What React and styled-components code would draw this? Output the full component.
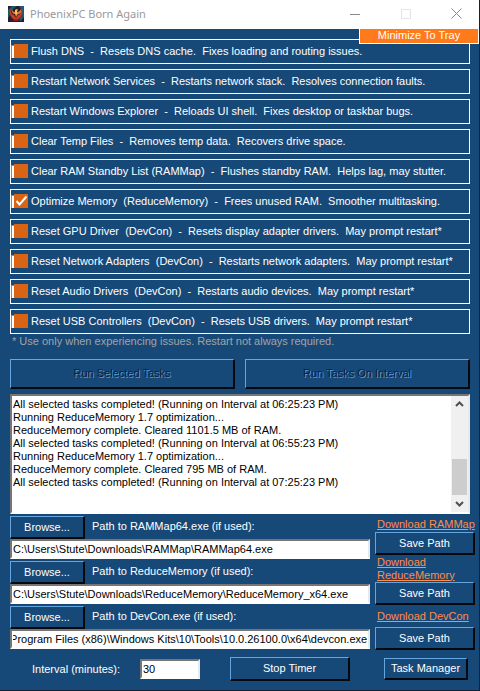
import React, { useEffect, useRef, useState } from 'react';
import styled, { createGlobalStyle, css } from 'styled-components';

const GlobalStyle = createGlobalStyle`
  *, *::before, *::after { box-sizing: border-box; }
  body {
    margin: 0;
    background: #174978;
    font: 11px/13px "Liberation Sans", Arial, sans-serif;
  }
  button, input, textarea { font: inherit; margin: 0; border-radius: 0; }
`;

const Window = styled.div`
  display: flex;
  flex-direction: column;
  min-height: 100vh;
  color: #fff;
  background: #174978;
  border-right: 1px solid #16222e;
  border-bottom: 1px solid #16222e;
`;

const TitleBar = styled.header`
  display: flex;
  align-items: center;
  height: 29px;
  padding: 0 0 2px 8px;
  gap: 6px;
  background: #fff;
  color: #999;
`;

const Title = styled.h1`
  flex: 1;
  margin: 0;
  font: 11px/16px "Noto Sans", sans-serif;
`;

const WindowButton = styled.button`
  display: grid;
  place-items: center;
  width: 45px;
  height: 27px;
  padding: 0;
  border: 0;
  background: none;
  color: ${(p) => (p.disabled ? '#e4e4e4' : '#8a8a8a')};
`;

const Client = styled.main`
  position: relative;
  display: flex;
  flex-direction: column;
  padding: 10px 4px 0 10px;
`;

const TrayButton = styled.button`
  position: absolute;
  top: 0;
  right: 0;
  width: 120px;
  height: 15px;
  padding: 0 0 2px;
  border: solid #fff;
  border-width: 0 1px 1px;
  background: #ff7a1a;
  color: #fff;
  line-height: 12px;
`;

const TaskList = styled.ul`
  display: flex;
  flex-direction: column;
  gap: 5px;
  margin: 0 5px 0 0;
  padding: 0;
  list-style: none;
`;

const TaskItem = styled.li`
  height: 25px;
  border: 1px solid #fff;
`;

const TaskLabel = styled.label`
  display: flex;
  align-items: center;
  height: 100%;
  padding-bottom: 1px;
  white-space: pre;
`;

const CheckWrap = styled.span`
  display: grid;
  margin-right: 3px;
  padding-left: 3px;
  background: linear-gradient(#8a8a8a, #8a8a8a) 0 1px / 3px 1px no-repeat,
    linear-gradient(90deg, #8a8a8a 1px, #fff 1px) 0 1px / 3px 13px no-repeat;
  & > * { grid-area: 1 / 1; }
  svg { pointer-events: none; }
`;

const CheckBox = styled.input`
  appearance: none;
  width: 14px;
  height: 14px;
  background: #d86414;
`;

const Footnote = styled.p`
  margin: 0 0 0 2px;
  padding-top: 1px;
  height: 25px;
  color: #a3a3a3;
`;

const RaisedButton = styled.button`
  height: ${(p) => p.$height || 23}px;
  width: ${(p) => (p.$width ? `${p.$width}px` : 'auto')};
  padding: 0;
  border: solid;
  border-width: 1px 2px 2px 1px;
  border-color: #66a6e0 #05090d #05090d #66a6e0;
  background: #174978;
  color: #fff;
  ${(p) =>
    p.disabled &&
    css`
      color: #0c2239;
      text-shadow: 1px 1px 0 #5b9bd8;
    `}
`;

const RunButtons = styled.div`
  display: grid;
  grid-template-columns: 1fr 1fr;
  gap: 10px;
  margin-right: 5px;
`;

const sunken = css`
  border: solid;
  border-width: 2px;
  border-color: #767676 #e6eaee #fff #767676;
  background: #fff;
  color: #000;
`;

const LogFrame = styled.div`
  ${sunken}
  display: flex;
  height: 120px;
  margin: 5px 5px 2px 0;
`;

const LogText = styled.textarea`
  flex: 1;
  min-width: 0;
  padding: 2px 1px;
  border: 0;
  outline: 0;
  resize: none;
  overflow: hidden;
  background: #fff;
  color: #000;
`;

const ScrollTrack = styled.div`
  display: flex;
  flex-direction: column;
  width: 17px;
  background: #f0f0f0;
`;

const ScrollArrow = styled.button`
  display: grid;
  place-items: center;
  height: 17px;
  padding: 0;
  border: 0;
  background: none;
  color: #505050;
`;

const ScrollThumb = styled.div`
  height: 36px;
  margin: auto 1px 0;
  background: #cdcdcd;
`;

const Paths = styled.section`
  display: grid;
  grid-template-columns: 1fr 100px;
  gap: 5px;
`;

const PathFields = styled.div`
  display: flex;
  flex-direction: column;
  gap: 2px;
  min-width: 0;
`;

const PathHeader = styled.div`
  display: flex;
  gap: 7px;
`;

const PathLabel = styled.label`
  padding-top: 4px;
`;

const TextBox = styled.input`
  ${sunken}
  display: block;
  width: ${(p) => p.$width || '100%'};
  height: 20px;
  padding: 0 1px;
  outline: 0;
`;

const PathActions = styled.div`
  display: grid;
  grid-template-rows: 16px 23px 27px 23px 22px 23px;
`;

const LinkCell = styled.div`
  display: flex;
  align-items: center;
  padding-left: 2px;
`;

const DownloadLink = styled.a`
  color: #ff8c4a;
`;

const Footer = styled.footer`
  display: flex;
  align-items: center;
  margin: 7px 7px 7px 0;
  padding-left: 22px;
`;

const IntervalLabel = styled.label`
  width: 108px;
`;

const StopSlot = styled.div`
  margin: 0 auto 0 30px;
`;

const tasks = [
  'Flush DNS  -  Resets DNS cache.  Fixes loading and routing issues.',
  'Restart Network Services  -  Restarts network stack.  Resolves connection faults.',
  'Restart Windows Explorer  -  Reloads UI shell.  Fixes desktop or taskbar bugs.',
  'Clear Temp Files  -  Removes temp data.  Recovers drive space.',
  'Clear RAM Standby List (RAMMap)  -  Flushes standby RAM.  Helps lag, may stutter.',
  'Optimize Memory  (ReduceMemory)  -  Frees unused RAM.  Smoother multitasking.',
  'Reset GPU Driver  (DevCon)  -  Resets display adapter drivers.  May prompt restart*',
  'Reset Network Adapters  (DevCon)  -  Restarts network adapters.  May prompt restart*',
  'Reset Audio Drivers  (DevCon)  -  Restarts audio devices.  May prompt restart*',
  'Reset USB Controllers  (DevCon)  -  Resets USB drivers.  May prompt restart*',
];

const log = [
  'All selected tasks completed! (Running on Interval at 06:25:23 PM)',
  'Running ReduceMemory 1.7 optimization...',
  'ReduceMemory complete. Cleared 1101.5 MB of RAM.',
  'All selected tasks completed! (Running on Interval at 06:55:23 PM)',
  'Running ReduceMemory 1.7 optimization...',
  'ReduceMemory complete. Cleared 795 MB of RAM.',
  'All selected tasks completed! (Running on Interval at 07:25:23 PM)',
].join('\n');

const tools = [
  { id: 'rammap', label: 'Path to RAMMap64.exe (if used):', path: 'C:\\Users\\Stute\\Downloads\\RAMMap\\RAMMap64.exe', link: 'Download RAMMap' },
  { id: 'reduce', label: 'Path to ReduceMemory (if used):', path: 'C:\\Users\\Stute\\Downloads\\ReduceMemory\\ReduceMemory_x64.exe', link: 'Download ReduceMemory' },
  { id: 'devcon', label: 'Path to DevCon.exe (if used):', path: 'C:\\Program Files (x86)\\Windows Kits\\10\\Tools\\10.0.26100.0\\x64\\devcon.exe', link: 'Download DevCon' },
];

function PhoenixLogo() {
  return (
    <svg width="16" height="16" viewBox="0 0 16 16" aria-hidden="true">
      <rect width="16" height="16" fill="#2a1c2c" />
      <path d="M0 4 4 0h5L4 4 2 9 0 12z" fill="#1b5a63" />
      <path d="M11 0h5v11l-3 4-2-1 3-5V5z" fill="#2a5478" />
      <path d="M2 3c-1 5 1 10 6 11 5-1 7-6 6-11-1 3-2 6-4 6l-2 3-2-3C4 9 3 6 2 3z" fill="#c9401f" />
      <path d="M4 2c-1 4 1 6 3 6l1 3 2-3c2 0 4-2 3-5-1 2-2 3-4 3L8 3 7 6C5 6 4 5 4 2z" fill="#ee7a30" />
      <path d="M7 4l2-1 1 1-1 1v3L8 9 7 7z" fill="#f8c05a" />
      <path d="M3 11c3 3 7 3 10 0l-3 4H6z" fill="#8a2030" />
    </svg>
  );
}

function CheckMark() {
  return (
    <svg width="14" height="14" viewBox="0 0 14 14" aria-hidden="true">
      <path d="M2.500 7 5.500 10.500 12.500 2.500" fill="none" stroke="#fff" strokeWidth="2" />
    </svg>
  );
}

function Chevron({ up }) {
  return (
    <svg width="9" height="7" viewBox="0 0 9 7" aria-hidden="true">
      <path d={up ? 'M1 5 4.500 1.500 8 5' : 'M1 2 4.500 5.500 8 2'} fill="none" stroke="currentColor" strokeWidth="2" />
    </svg>
  );
}

function Task({ text, initial }) {
  const [on, setOn] = useState(initial);
  return (
    <TaskItem>
      <TaskLabel>
        <CheckWrap>
          <CheckBox type="checkbox" checked={on} onChange={() => setOn(!on)} />
          {on && <CheckMark />}
        </CheckWrap>
        {text}
      </TaskLabel>
    </TaskItem>
  );
}

function PathField({ tool }) {
  const ref = useRef(null);
  useEffect(() => {
    ref.current.scrollLeft = ref.current.scrollWidth;
  }, []);
  return (
    <div>
      <PathHeader>
        <RaisedButton $width={75}>Browse...</RaisedButton>
        <PathLabel htmlFor={tool.id}>{tool.label}</PathLabel>
      </PathHeader>
      <TextBox ref={ref} id={tool.id} type="text" defaultValue={tool.path} spellCheck={false} />
    </div>
  );
}

export default function App() {
  return (
    <>
      <GlobalStyle />
      <Window>
        <TitleBar>
          <PhoenixLogo />
          <Title>PhoenixPC Born Again</Title>
          <WindowButton aria-label="Minimize">
            <svg width="10" height="10"><path d="M0 5.500h10" stroke="currentColor" /></svg>
          </WindowButton>
          <WindowButton aria-label="Maximize" disabled>
            <svg width="10" height="10"><path d="M.500.500h9v9h-9z" fill="none" stroke="currentColor" /></svg>
          </WindowButton>
          <WindowButton aria-label="Close">
            <svg width="11" height="11"><path d="M.500.500l10 10M10.500.500l-10 10" stroke="currentColor" /></svg>
          </WindowButton>
        </TitleBar>
        <Client>
          <TaskList>
            {tasks.map((text, i) => (
              <Task key={text} text={text} initial={i === 5} />
            ))}
          </TaskList>
          <TrayButton>Minimize To Tray</TrayButton>
          <Footnote>* Use only when experiencing issues. Restart not always required.</Footnote>
          <RunButtons>
            <RaisedButton $height={30} disabled>Run Selected Tasks</RaisedButton>
            <RaisedButton $height={30} disabled>Run Tasks On Interval</RaisedButton>
          </RunButtons>
          <LogFrame>
            <LogText readOnly aria-label="Task log" value={log} />
            <ScrollTrack>
              <ScrollArrow aria-label="Scroll up"><Chevron up /></ScrollArrow>
              <ScrollThumb />
              <ScrollArrow aria-label="Scroll down"><Chevron /></ScrollArrow>
            </ScrollTrack>
          </LogFrame>
          <Paths>
            <PathFields>
              {tools.map((tool) => (
                <PathField key={tool.id} tool={tool} />
              ))}
            </PathFields>
            <PathActions>
              {tools.map((tool) => (
                <React.Fragment key={tool.id}>
                  <LinkCell><DownloadLink href={`#${tool.id}`}>{tool.link}</DownloadLink></LinkCell>
                  <RaisedButton>Save Path</RaisedButton>
                </React.Fragment>
              ))}
            </PathActions>
          </Paths>
          <Footer>
            <IntervalLabel htmlFor="interval">Interval (minutes):</IntervalLabel>
            <TextBox id="interval" type="text" defaultValue="30" $width="60px" />
            <StopSlot>
              <RaisedButton $width={120} $height={24}>Stop Timer</RaisedButton>
            </StopSlot>
            <RaisedButton $width={84} $height={22}>Task Manager</RaisedButton>
          </Footer>
        </Client>
      </Window>
    </>
  );
}
